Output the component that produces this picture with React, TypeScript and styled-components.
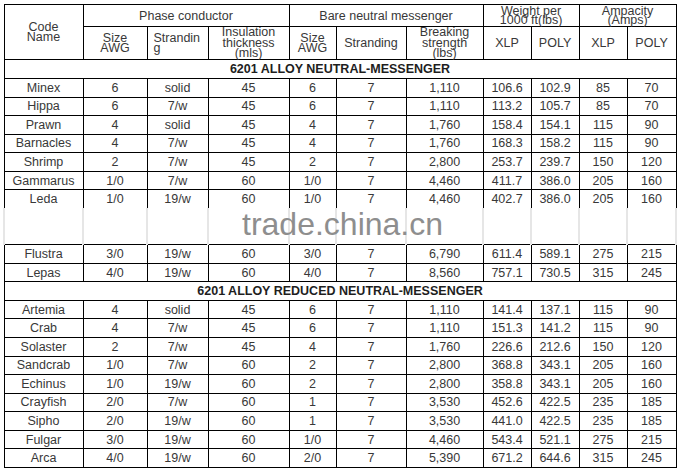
import styled, { createGlobalStyle } from 'styled-components';

const GlobalStyle = createGlobalStyle`
  body {
    margin: 0;
    background: #fff;
    font-family: "Liberation Sans", Arial, sans-serif;
  }
`;

const Sheet = styled.div`
  position: relative;
  margin: 4px 0 0 3px;
  width: 673px;
`;

const Table = styled.table`
  border-collapse: collapse;
  table-layout: fixed;
  width: 673px;
  font-size: 12.5px;
  color: #383838;
`;

const HeadCell = styled.th<{ $lh?: number; $left?: boolean }>`
  border: 1px solid #000;
  padding: 0 ${(p) => (p.$left ? '0 0 6px' : '0')};
  font-weight: normal;
  line-height: ${(p) => p.$lh ?? 12}px;
  text-align: ${(p) => (p.$left ? 'left' : 'center')};
  vertical-align: middle;
`;

const HeadRow = styled.tr<{ $h: number }>`
  height: ${(p) => p.$h}px;
`;

const SectionCell = styled.td`
  border: 1px solid #000;
  padding: 0;
  font-weight: bold;
  color: #1e1e1e;
  text-align: center;
  line-height: 14px;
`;

const DataRow = styled.tr`
  height: 18.55px;
`;

const Cell = styled.td`
  border: 1px solid #000;
  padding: 0;
  text-align: center;
  line-height: 14px;
  white-space: nowrap;
`;

const GapCell = styled.td`
  height: 36px;
  padding: 0;
  border-left: 2px solid #e6e6e6;
  border-right: 2px solid #e6e6e6;
  border-top: hidden;
  border-bottom: 1px solid #000;
`;

const Watermark = styled.div`
  position: absolute;
  top: 204px;
  left: 239px;
  font-size: 32px;
  line-height: 32px;
  color: #8e8e8e;
  pointer-events: none;
`;

const widths = [79, 64, 61, 81, 47, 70, 77, 48, 48, 48, 49];

type Row = string[];

const neutral: Row[] = [
  ['Minex', '6', 'solid', '45', '6', '7', '1,110', '106.6', '102.9', '85', '70'],
  ['Hippa', '6', '7/w', '45', '6', '7', '1,110', '113.2', '105.7', '85', '70'],
  ['Prawn', '4', 'solid', '45', '4', '7', '1,760', '158.4', '154.1', '115', '90'],
  ['Barnacles', '4', '7/w', '45', '4', '7', '1,760', '168.3', '158.2', '115', '90'],
  ['Shrimp', '2', '7/w', '45', '2', '7', '2,800', '253.7', '239.7', '150', '120'],
  ['Gammarus', '1/0', '7/w', '60', '1/0', '7', '4,460', '411.7', '386.0', '205', '160'],
  ['Leda', '1/0', '19/w', '60', '1/0', '7', '4,460', '402.7', '386.0', '205', '160'],
];

const neutralTail: Row[] = [
  ['Flustra', '3/0', '19/w', '60', '3/0', '7', '6,790', '611.4', '589.1', '275', '215'],
  ['Lepas', '4/0', '19/w', '60', '4/0', '7', '8,560', '757.1', '730.5', '315', '245'],
];

const reduced: Row[] = [
  ['Artemia', '4', 'solid', '45', '6', '7', '1,110', '141.4', '137.1', '115', '90'],
  ['Crab', '4', '7/w', '45', '6', '7', '1,110', '151.3', '141.2', '115', '90'],
  ['Solaster', '2', '7/w', '45', '4', '7', '1,760', '226.6', '212.6', '150', '120'],
  ['Sandcrab', '1/0', '7/w', '60', '2', '7', '2,800', '368.8', '343.1', '205', '160'],
  ['Echinus', '1/0', '19/w', '60', '2', '7', '2,800', '358.8', '343.1', '205', '160'],
  ['Crayfish', '2/0', '7/w', '60', '1', '7', '3,530', '452.6', '422.5', '235', '185'],
  ['Sipho', '2/0', '19/w', '60', '1', '7', '3,530', '441.0', '422.5', '235', '185'],
  ['Fulgar', '3/0', '19/w', '60', '1/0', '7', '4,460', '543.4', '521.1', '275', '215'],
  ['Arca', '4/0', '19/w', '60', '2/0', '7', '5,390', '671.2', '644.6', '315', '245'],
];

const rows = (data: Row[]) =>
  data.map((r) => (
    <DataRow key={r[0]}>
      {r.map((v, i) => <Cell key={i}>{v}</Cell>)}
    </DataRow>
  ));

export default function App() {
  return (
    <>
      <GlobalStyle />
      <Sheet>
        <Table>
          <colgroup>
            {widths.map((w, i) => <col key={i} style={{ width: w }} />)}
          </colgroup>
          <thead>
            <HeadRow $h={22}>
              <HeadCell rowSpan={2} $lh={10.5}>Code<br />Name</HeadCell>
              <HeadCell colSpan={3}>Phase conductor</HeadCell>
              <HeadCell colSpan={3}>Bare neutral messenger</HeadCell>
              <HeadCell colSpan={2} $lh={9}>Weight per<br />1000 ft(lbs)</HeadCell>
              <HeadCell colSpan={2} $lh={9}>Ampacity<br />(Amps)</HeadCell>
            </HeadRow>
            <HeadRow $h={33}>
              <HeadCell $lh={10.5}>Size<br />AWG</HeadCell>
              <HeadCell $lh={10.5} $left>Strandin<br />g</HeadCell>
              <HeadCell $lh={10.5}>Insulation<br />thickness<br />(mls)</HeadCell>
              <HeadCell $lh={10.5}>Size<br />AWG</HeadCell>
              <HeadCell>Stranding</HeadCell>
              <HeadCell $lh={10.5}>Breaking<br />strength<br />(lbs)</HeadCell>
              <HeadCell>XLP</HeadCell>
              <HeadCell>POLY</HeadCell>
              <HeadCell>XLP</HeadCell>
              <HeadCell>POLY</HeadCell>
            </HeadRow>
          </thead>
          <tbody>
            <HeadRow $h={19}>
              <SectionCell colSpan={11}>6201 ALLOY NEUTRAL-MESSENGER</SectionCell>
            </HeadRow>
            {rows(neutral)}
            <tr>
              {widths.map((_, i) => <GapCell key={i} />)}
            </tr>
            {rows(neutralTail)}
            <HeadRow $h={18.5}>
              <SectionCell colSpan={11}>6201 ALLOY REDUCED NEUTRAL-MESSENGER</SectionCell>
            </HeadRow>
            {rows(reduced)}
          </tbody>
        </Table>
        <Watermark>trade.china.cn</Watermark>
      </Sheet>
    </>
  );
}
